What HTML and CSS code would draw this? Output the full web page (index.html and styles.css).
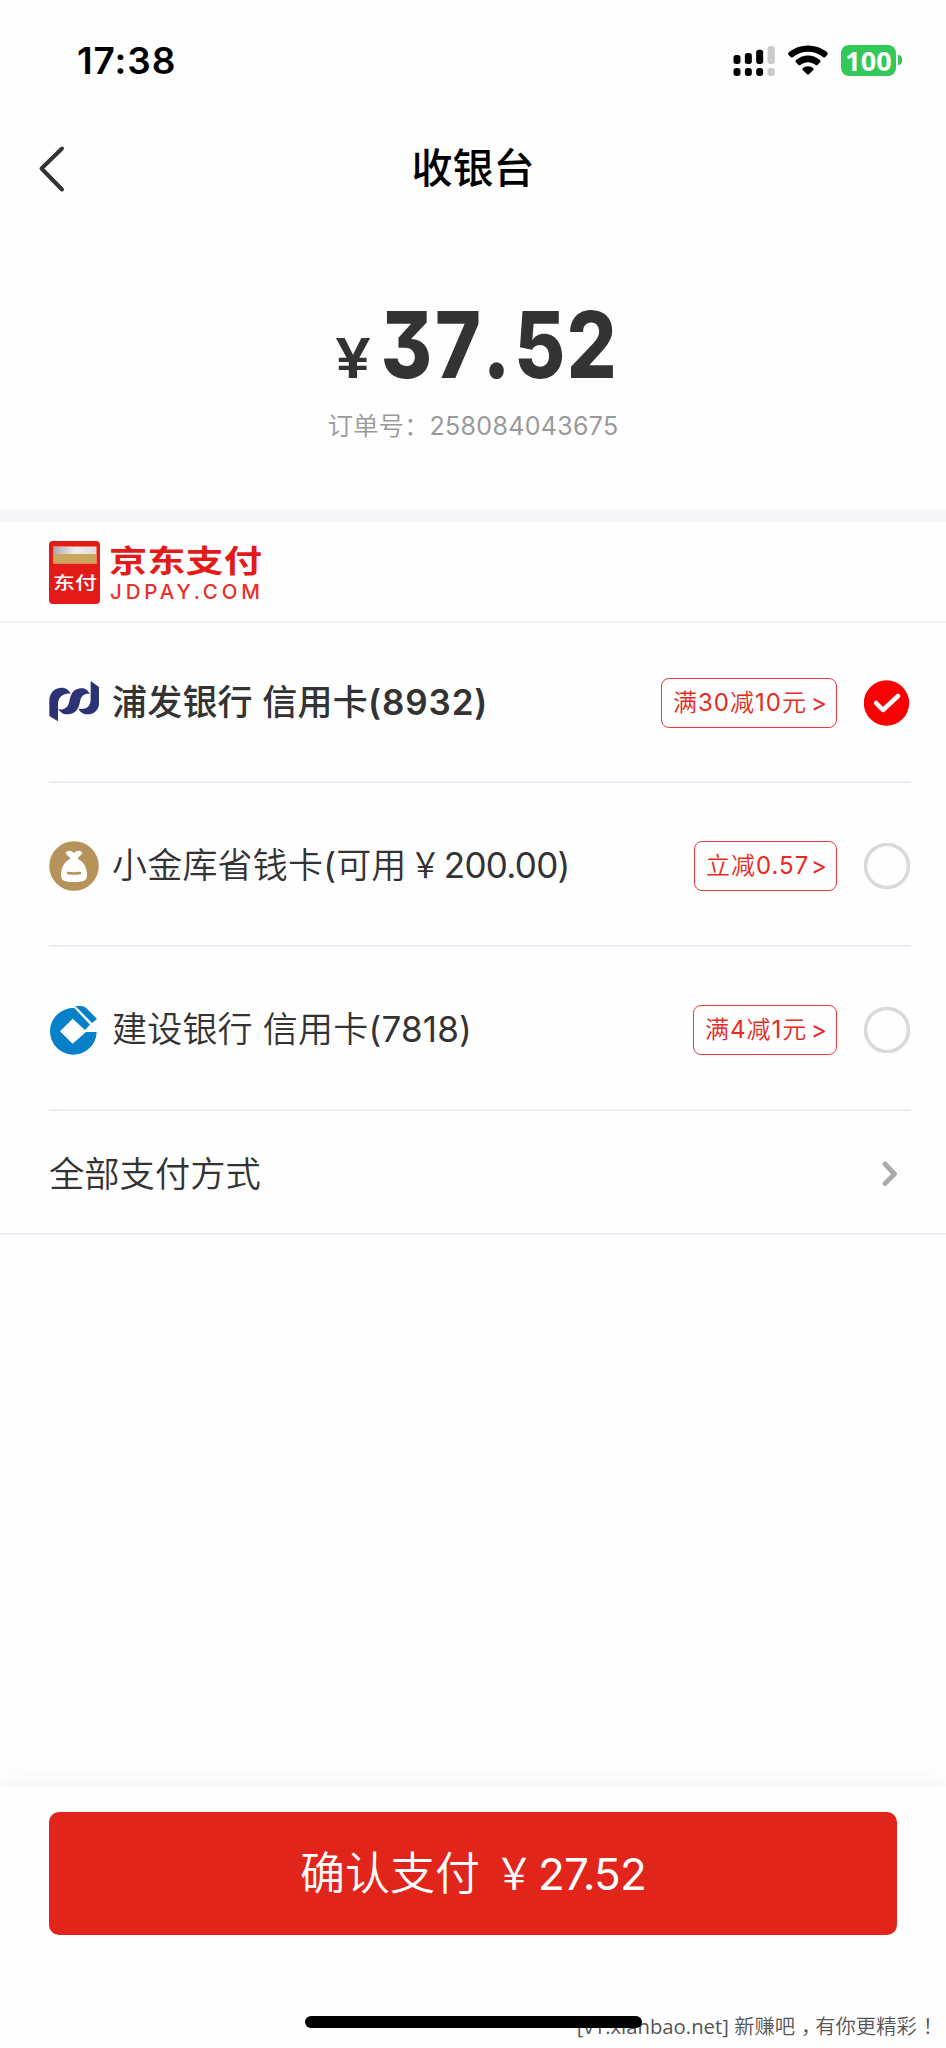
FILE: index.html
```html
<!DOCTYPE html>
<html lang="zh-CN">
<head>
<meta charset="utf-8">
<title>收银台</title>
<link rel="stylesheet" href="styles.css">
</head>
<body>
<div class="screen">
  <header class="status">
    <span class="clock">17:38</span>
    <div class="indicators">
      <svg class="signal" viewBox="279 72 128 96">
        <g fill="#000">
          <rect x="280" y="102" width="21" height="27" rx="8"/><rect x="314" y="96" width="21" height="33" rx="8"/><rect x="348" y="86" width="21" height="43" rx="8"/>
          <rect x="280" y="141" width="21" height="24" rx="9"/><rect x="314" y="141" width="21" height="24" rx="9"/><rect x="348" y="141" width="21" height="24" rx="9"/>
        </g>
        <g fill="#ccc"><rect x="382" y="75" width="22" height="54" rx="8"/><rect x="382" y="141" width="22" height="24" rx="9"/></g>
      </svg>
      <svg class="wifi" viewBox="444 72 118 90">
        <path d="M444 101Q442 97 446 93C480 67 526 67 560 93Q564 97 561 101L555 108Q552 111 548 108C521 87 485 87 458 108Q454 111 451 108Z"/>
        <path d="M466 123Q464 119 468 116C489 99 517 99 538 116Q542 119 540 123L532 131Q529 134 525 131C511 121 495 121 481 131Q477 134 474 131Z"/>
        <path d="M487 142C496 134 510 134 519 142Q521 145 518 148L507 158Q503 163 499 158L488 148Q485 145 487 142Z"/>
      </svg>
      <div class="battery"><span class="level">100</span><span class="nub"></span></div>
    </div>
  </header>

  <nav class="nav">
    <svg class="back" viewBox="0 0 30 50"><path d="M25 5.500L4.500 25.500L25 46.500" fill="none" stroke="#333" stroke-width="4" stroke-linecap="round" stroke-linejoin="round"/></svg>
    <h1 class="title">收银台</h1>
  </nav>

  <section class="summary">
    <svg class="amount" viewBox="0 0 290 90">
      <text class="yen" x="7" y="77" textLength="36" lengthAdjust="spacingAndGlyphs">¥</text>
      <text class="price" transform="translate(0 77) scale(.85 1)"><tspan x="62">3</tspan><tspan x="126">7</tspan><tspan x="182">.</tspan><tspan x="219">5</tspan><tspan x="281">2</tspan></text>
    </svg>
    <div class="order"><span>订单号：</span><span class="order-no">258084043675</span></div>
  </section>

  <section class="brand">
    <svg class="jdpay" viewBox="0 0 216 64">
      <defs><linearGradient id="silver"><stop offset="0" stop-color="#aaa"/><stop offset=".5" stop-color="#eee"/><stop offset="1" stop-color="#ddd"/></linearGradient></defs>
      <rect x="0" y="0" width="51" height="63" rx="4" fill="#e31a17"/>
      <rect x="4" y="5" width="44" height="18" rx="1" fill="#ee7c67"/>
      <rect x="5" y="6" width="42" height="7" fill="url(#silver)"/>
      <rect x="5" y="13" width="42" height="9" fill="#c9a75c"/>
      <text class="mark" x="4" y="48" textLength="44" lengthAdjust="spacingAndGlyphs">东付</text>
      <text class="wordmark" x="60" y="31" textLength="153" lengthAdjust="spacingAndGlyphs">京东支付</text>
      <text class="domain" x="61" y="57.500" textLength="150" lengthAdjust="spacing">JDPAY.COM</text>
    </svg>
  </section>

  <main class="methods">
    <div class="method chosen">
      <svg class="logo" viewBox="57 80 150 150"><g fill="#2c3274">
        <path d="M58 200V155C58 130 74 115 95 115C108 115 118 123 122 133C104 130 84 140 84 165V216Z"/>
        <path d="M84 178C92 182 100 181 106 176C120 168 117 148 124 136C130 121 145 115 160 117C169 119 175 126 180 134C165 132 154 137 150 157C146 177 138 194 112 195C98 195 90 187 84 178Z"/>
        <path d="M182 95L208 114V155C208 180 195 195 172 195C160 195 150 188 145 178C162 181 182 178 182 150Z"/>
      </g></svg>
      <span class="name">浦发银行 信用卡<span class="num">(8932)</span></span>
      <span class="offer o1">满<span class="num">30</span>减<span class="num">10</span>元<span class="gt">&gt;</span></span>
      <svg class="radio on" viewBox="0 0 46 46"><circle cx="22.500" cy="23" r="22.700" fill="#fa0000"/><path d="M12 23L19 30L34 16" fill="none" stroke="#fff" stroke-width="4.500" stroke-linecap="round" stroke-linejoin="round"/></svg>
    </div>
    <div class="method">
      <svg class="logo" viewBox="0 0 50 50"><circle cx="25" cy="25" r="24.800" fill="#b5935b"/>
        <path d="M21 18Q22 17 18 14Q15 11 19 10Q22 9 25 12Q28 9 31 10Q35 11 32 14Q28 17 29 18C35 21 38 27 38 34Q38 40 32 40.500Q25 41.500 18 40.500Q12 40 12 34C12 27 15 21 21 18Z" fill="#fff"/>
        <path d="M19 32Q25 33 31 32" fill="none" stroke="#b5935b" stroke-width="2.500" stroke-linecap="round"/></svg>
      <span class="name">小金库省钱卡<span class="num">(</span>可用<span class="fullyen">￥</span><span class="num tight">200.00)</span></span>
      <span class="offer o2">立减<span class="num">0.57</span><span class="gt">&gt;</span></span>
      <svg class="radio" viewBox="0 0 46 46"><circle cx="23" cy="23" r="21.500" fill="none" stroke="#d9d9d9" stroke-width="3.500"/></svg>
    </div>
    <div class="method">
      <svg class="logo" viewBox="57 76 150 150"><g fill="#0680c8">
        <path d="M200 157H168L128 192L90 155L128 117L165 151L180 135L133 85A70 70 0 1 0 200 157Z"/>
        <path d="M135 80C150 78 160 78 168 84L201 118L186 130L145 88Q141 84 135 80Z"/>
      </g></svg>
      <span class="name">建设银行 信用卡<span class="num">(7818)</span></span>
      <span class="offer o3">满<span class="num">4</span>减<span class="num">1</span>元<span class="gt">&gt;</span></span>
      <svg class="radio" viewBox="0 0 46 46"><circle cx="23" cy="23" r="21.500" fill="none" stroke="#d9d9d9" stroke-width="3.500"/></svg>
    </div>
    <div class="more">
      <span>全部支付方式</span>
      <svg class="arrow" viewBox="0 0 16 26"><path d="M3 3L12.500 13L3 22.500" fill="none" stroke="#aaa" stroke-width="4.800" stroke-linecap="round" stroke-linejoin="round"/></svg>
    </div>
  </main>

  <footer class="footer">
    <button class="pay"><span class="pay-label">确认支付</span><span class="fullyen">￥</span><span class="pay-sum">27.52</span></button>
    <div class="credit">[v1.xianbao.net] <span class="slogan">新赚吧<span class="mid">，</span>有你更精彩<span class="mid">！</span></span></div>
    <div class="home"></div>
  </footer>
</div>
</body>
</html>
```

FILE: styles.css
```css
* { box-sizing: border-box; }
body {
  margin: 0;
  background: #fefefe;
  color: #333;
  font-family: Inter, "Noto Sans CJK SC", sans-serif;
}
svg { display: block; flex: none; }
.screen { width: 946px; height: 2048px; display: flex; flex-direction: column; overflow: hidden; }

.status { height: 120px; padding: 1px 44px 0 77px; display: flex; justify-content: space-between; align-items: center; color: #000; }
.clock { font-size: 37px; font-weight: 600; line-height: 44px; letter-spacing: .9px; }
.indicators { display: flex; align-items: center; }
.signal { width: 43px; height: 32px; margin-right: 12px; }
.wifi { width: 40px; height: 30px; margin-right: 13px; margin-top: -2px; }
.battery { display: flex; align-items: center; gap: 2px; margin-top: -1px; }
.level { width: 55px; height: 31px; border-radius: 8px; background: #34c759; color: #fff; font: 700 27px/31px "Noto Sans", sans-serif; text-align: center; }
.nub { width: 4px; height: 10px; border-radius: 0 5px 5px 0; background: #34c759; }

.nav { height: 95px; padding: 0 37px; display: grid; grid-template-columns: 30px 1fr 30px; align-items: center; }
.back { width: 30px; height: 50px; }
.title { margin: 0; text-align: center; font-size: 41px; font-weight: 500; line-height: 60px; color: #000; }

.summary { height: 294px; padding-top: 86px; display: flex; flex-direction: column; align-items: center; }
.amount { width: 290px; height: 90px; fill: #333; overflow: visible; }
.yen { font-size: 55px; font-weight: 600; }
.price { font-size: 92px; font-weight: 800; font-feature-settings: "cv09"; }
.order { display: flex; margin-top: 17px; font-size: 25.500px; font-weight: 350; line-height: 36px; color: #999; }
.order-no { font-size: 25px; font-weight: 400; letter-spacing: .3px; }

.brand { height: 114px; border-top: 13px solid #f5f5fa; border-bottom: 2px solid #f1f1f6; padding: 19px 49px; }
.jdpay { width: 216px; height: 64px; overflow: visible; }
.mark { font: 500 17.500px "Noto Sans CJK SC", sans-serif; fill: #fff; }
.wordmark { font: 700 31px "Noto Sans CJK SC", sans-serif; fill: #e31a17; }
.domain { font: 500 20.500px Inter, sans-serif; fill: #e9302c; }

.method { height: 164px; margin: 0 35px 0 49px; padding-top: 4px; display: flex; align-items: center; border-bottom: 2px solid #ededf5; }
.method.chosen { height: 160px; padding-top: 1px; }
.logo { width: 50px; height: 50px; margin-right: 13px; }
.chosen .logo { margin-top: -3px; }
.name { flex: 1; white-space: nowrap; font-size: 35px; font-weight: 350; line-height: 50px; letter-spacing: .2px; padding-bottom: 2px; }
.num { font-weight: 400; }
.tight { letter-spacing: -.7px; margin-left: 2px; }
.fullyen { display: inline-block; font-weight: 400; transform: translateX(1px) scaleX(.88); }
.chosen .name { font-weight: 500; }
.chosen .name .num { font-weight: 600; letter-spacing: .9px; }
.offer { display: flex; height: 50px; margin-right: 27px; padding-left: 11px; border: 1.500px solid #f0383a; border-radius: 8px; color: #e52a22; font-size: 24px; font-weight: 350; line-height: 47px; letter-spacing: 1px; white-space: nowrap; }
.gt { margin-left: auto; margin-right: 8px; font-weight: 400; }
.o1 { width: 176px; }
.o2 { width: 143px; }
.o3 { width: 144px; }
.radio { width: 46px; height: 46px; margin-right: 1px; }
.more { height: 124px; padding: 3px 48px 0 49px; display: flex; align-items: center; justify-content: space-between; border-bottom: 2px solid #ededf5; font-size: 35.300px; font-weight: 350; }
.more span { padding-bottom: 4px; }
.arrow { width: 16px; height: 26px; }

.footer { position: relative; height: 262px; margin-top: auto; padding: 26px 49px 0; background: #fefefe; box-shadow: 0 -2px 22px rgba(0, 0, 0, .06); }
.pay { width: 848px; height: 123px; padding: 0; display: flex; justify-content: center; align-items: center; border: 0; border-radius: 10px; background: #e1251b; color: #fff; font: 400 44px/60px Inter, "Noto Sans CJK SC", sans-serif; }
.pay-label { font-size: 45px; font-weight: 350; margin-right: 11px; }
.pay-sum { letter-spacing: -.8px; margin-left: 3px; }
.credit { position: absolute; right: 9px; bottom: 8px; font: 400 20.300px/28px "Open Sans", "Noto Sans CJK SC", sans-serif; color: #555; white-space: nowrap; }
.slogan { font-weight: 350; font-family: "Noto Sans CJK SC", sans-serif; }
.mid { display: inline-block; transform: translateX(6px); }
.home { position: absolute; left: 305px; top: 230px; width: 337px; height: 12px; border-radius: 6px; background: #000; }
```
